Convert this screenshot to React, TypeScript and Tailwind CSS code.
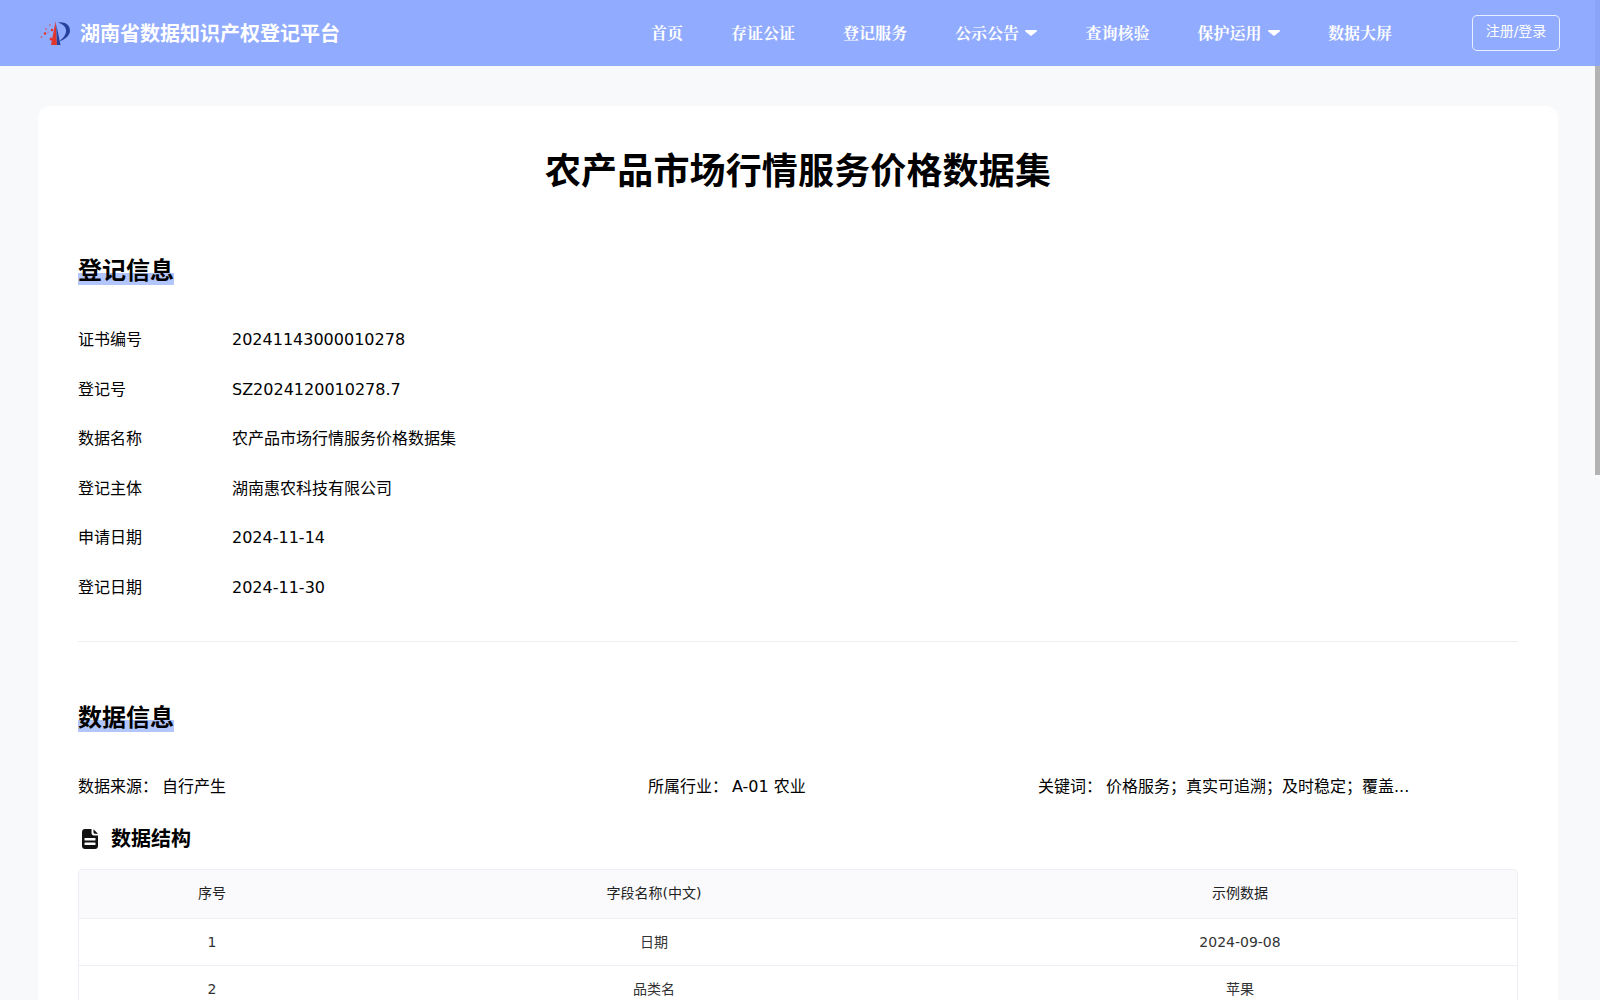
const navItems = [
  { label: "首页" },
  { label: "存证公证" },
  { label: "登记服务" },
  { label: "公示公告", caret: true },
  { label: "查询核验" },
  { label: "保护运用", caret: true },
  { label: "数据大屏" },
]

const regInfo = [
  ["证书编号", "20241143000010278"],
  ["登记号", "SZ2024120010278.7"],
  ["数据名称", "农产品市场行情服务价格数据集"],
  ["登记主体", "湖南惠农科技有限公司"],
  ["申请日期", "2024-11-14"],
  ["登记日期", "2024-11-30"],
]

const rows = [
  ["1", "日期", "2024-09-08"],
  ["2", "品类名", "苹果"],
]

function Logo() {
  return (
    <svg width="30" height="24" viewBox="0 0 30 24" className="shrink-0">
      <path d="M11 24 L15.6 0 L17 24 Z" fill="#e2362c" />
      <path d="M17 24 L16.2 3 L20.5 24 Z" fill="#25419c" />
      <path d="M18 1.5 C25 0.5 30 4 30 9.5 C30 15 24 19 19 20.5 C23 17.5 26.5 13.5 26 9 C25.5 5 22 2.8 18 1.5 Z" fill="#25419c" />
      <circle cx="12" cy="9" r="1.3" fill="#e2362c" />
      <circle cx="10" cy="4" r="0.7" fill="#e2362c" />
      <circle cx="6" cy="8" r="0.8" fill="#e2362c" />
      <circle cx="5" cy="12.5" r="1.3" fill="#e2362c" />
      <circle cx="8" cy="11" r="0.6" fill="#e2362c" />
      <circle cx="11" cy="18" r="1.5" fill="#e2362c" />
      <circle cx="1.5" cy="16" r="0.8" fill="#e2362c" />
    </svg>
  )
}

function Caret() {
  return (
    <svg width="12" height="6" viewBox="0 0 12 6" className="shrink-0">
      <path d="M1 0 H11 C11.9 0 12.3 0.9 11.7 1.5 L6.7 5.6 C6.3 6 5.7 6 5.3 5.6 L0.3 1.5 C-0.3 0.9 0.1 0 1 0 Z" fill="white" />
    </svg>
  )
}

function DocIcon() {
  return (
    <svg width="16" height="20" viewBox="0 0 16 20" className="shrink-0">
      <path d="M3 0 H9.5 V4 C9.5 5.4 10.6 6.5 12 6.5 H16 V17 C16 18.7 14.7 20 13 20 H3 C1.3 20 0 18.7 0 17 V3 C0 1.3 1.3 0 3 0 Z" fill="#111111" />
      <path d="M11.5 0.3 L16 4.8 H13 C12.2 4.8 11.5 4.1 11.5 3.3 Z" fill="#111111" />
      <rect x="2.5" y="9" width="11" height="2.5" rx="0.5" fill="white" />
      <rect x="2.5" y="13.5" width="11" height="2.5" rx="0.5" fill="white" />
    </svg>
  )
}

function SectionTitle({ text }: { text: string }) {
  return (
    <h2 className="w-fit text-2xl leading-[28px] font-bold text-black bg-[linear-gradient(transparent_16px,#b3c6fb_16px)]">
      {text}
    </h2>
  )
}

export default function App() {
  return (
    <div className="min-h-screen bg-[#f8f9fa] font-['DejaVu_Sans','Noto_Sans_CJK_SC',sans-serif] text-black">
      <header className="fixed top-0 left-0 z-10 flex h-[66px] w-full items-center bg-[#91abff] pr-10 pl-10">
        <Logo />
        <span className="ml-[10px] font-['Noto_Sans_CJK_SC',sans-serif] text-xl font-bold text-white">
          湖南省数据知识产权登记平台
        </span>
        <nav className="ml-auto flex items-center gap-12 font-['Noto_Serif_CJK_SC','DejaVu_Serif','Noto_Sans_CJK_SC',serif] text-base font-bold text-white">
          {navItems.map((item) => (
            <a key={item.label} className="flex items-center gap-[6.5px]">
              {item.label}
              {item.caret && <Caret />}
            </a>
          ))}
        </nav>
        <button className="ml-20 h-9 w-[88px] rounded-[5px] border border-white/80 pb-1 text-sm text-white">
          注册/登录
        </button>
        <div className="absolute top-0 right-0 h-full w-[5px] bg-[#8aa4f6]" />
      </header>

      {/* page scrollbar as it stands in the picture */}
      <div className="fixed top-[66px] right-0 h-[409px] w-[5px] bg-[#b3b3b3]" />

      <main className="pt-[106px] pr-[42px] pb-10 pl-[38px]">
        <div className="h-[2000px] rounded-xl bg-white px-10 pt-[41px]">
          <h1 className="text-center text-4xl leading-[50px] font-bold tracking-[0.15px] text-black">
            农产品市场行情服务价格数据集
          </h1>

          <div className="mt-[60px]">
            <SectionTitle text="登记信息" />
          </div>
          <div className="mt-[30.5px] flex flex-col">
            {regInfo.map(([label, value]) => (
              <div key={label} className="flex h-[49.5px] items-center text-base">
                <span className="w-[154px]">{label}</span>
                <span>{value}</span>
              </div>
            ))}
          </div>

          <div className="mt-[28.5px] border-t border-[#eeeeee]" />

          <div className="mt-[62px]">
            <SectionTitle text="数据信息" />
          </div>
          <div className="mt-[43px] flex text-base leading-6">
            <div className="flex w-[570px]">
              <span className="w-[84px]">数据来源：</span>
              <span>自行产生</span>
            </div>
            <div className="flex w-[390px]">
              <span className="w-[84px]">所属行业：</span>
              <span>A-01 农业</span>
            </div>
            <div className="flex">
              <span className="w-[68px]">关键词：</span>
              <span>价格服务；真实可追溯；及时稳定；覆盖...</span>
            </div>
          </div>

          <div className="mt-[26px] flex items-center gap-[13px] pl-1">
            <DocIcon />
            <span className="text-xl font-bold">数据结构</span>
          </div>

          <div className="mt-[16px] overflow-hidden rounded border border-[#ebeef5]">
            <table className="w-full table-fixed border-collapse text-center text-sm">
              <thead className="bg-[#fafafc]">
                <tr className="h-[48px] border-b border-[#ebeef5]">
                  <th className="w-[266px] pb-0.5 font-normal text-[#222222]">序号</th>
                  <th className="w-[618px] pb-0.5 font-normal text-[#222222]">字段名称(中文)</th>
                  <th className="pb-0.5 font-normal text-[#222222]">示例数据</th>
                </tr>
              </thead>
              <tbody className="text-[#333333]">
                {rows.map((row) => (
                  <tr key={row[0]} className="h-[47px] border-b border-[#ebeef5]">
                    <td>{row[0]}</td>
                    <td>{row[1]}</td>
                    <td>{row[2]}</td>
                  </tr>
                ))}
              </tbody>
            </table>
          </div>
        </div>
      </main>
    </div>
  )
}
